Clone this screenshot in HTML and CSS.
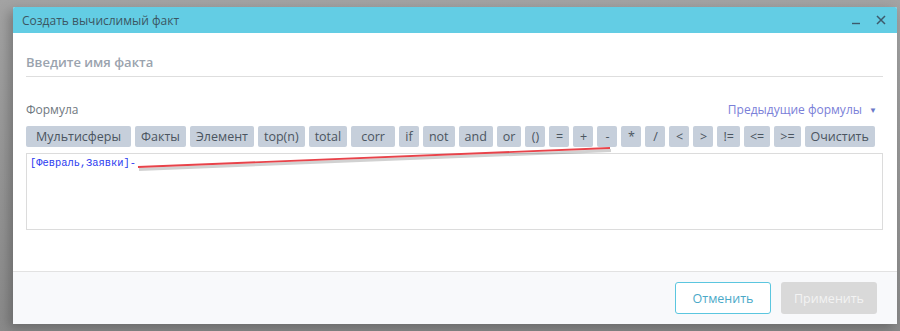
FILE: index.html
```html
<!DOCTYPE html>
<html lang="ru">
<head>
  <meta charset="UTF-8">
  <title>Создать вычислимый факт</title>
  <link rel="stylesheet" href="styles.css">
</head>
<body>
  <div class="dialog">
    <div class="dialog-header">
      <span class="dialog-title">Создать вычислимый факт</span>
      <div class="header-tools">
        <svg class="tool-icon" width="10" height="10" viewBox="0 0 10 10"><path d="M1 8.5h8" stroke="#3d5a6c" stroke-width="1.4"/></svg>
        <svg class="tool-icon" width="10" height="10" viewBox="0 0 10 10"><path d="M1 1l8 8M9 1l-8 8" stroke="#3d5a6c" stroke-width="1.5"/></svg>
      </div>
    </div>

    <div class="dialog-body">
      <div class="name-field">Введите имя факта</div>

      <div class="formula-row">
        <span class="formula-label">Формула</span>
        <span class="prev-formulas">Предыдущие формулы <span class="caret">&#9660;</span></span>
      </div>

      <div class="toolbar">
        <button class="op op-wide">Мультисферы</button>
        <button class="op">Факты</button>
        <button class="op">Элемент</button>
        <button class="op">top(n)</button>
        <button class="op">total</button>
        <button class="op op-corr">corr</button>
        <button class="op">if</button>
        <button class="op">not</button>
        <button class="op">and</button>
        <button class="op">or</button>
        <button class="op">()</button>
        <button class="op">=</button>
        <button class="op">+</button>
        <button class="op">-</button>
        <button class="op">*</button>
        <button class="op">/</button>
        <button class="op">&lt;</button>
        <button class="op">&gt;</button>
        <button class="op">!=</button>
        <button class="op">&lt;=</button>
        <button class="op">&gt;=</button>
        <button class="op">Очистить</button>
      </div>

      <div class="formula-box">[Февраль,Заявки]-</div>
    </div>

    <div class="dialog-footer">
      <button class="btn btn-cancel">Отменить</button>
      <button class="btn btn-apply">Применить</button>
    </div>
  </div>

  <!-- пометка на скриншоте -->
  <svg class="mark" width="900" height="331" viewBox="0 0 900 331">
    <line x1="139" y1="169.5" x2="611" y2="150.5" stroke="rgba(0,0,0,0.18)" stroke-width="3"/>
    <line x1="138" y1="167" x2="610" y2="148" stroke="#e8434a" stroke-width="1.8"/>
  </svg>
</body>
</html>
```

FILE: styles.css
```css
body {
  margin: 0;
  padding: 7px 3px 0 13px;
  height: 331px;
  box-sizing: border-box;
  background: linear-gradient(to bottom, #a3a3a3 0%, #8a8a8a 100%);
  font-family: 'Open Sans', sans-serif;
  position: relative;
  overflow: hidden;
}

.dialog {
  width: 884px;
  background: #ffffff;
  box-shadow: -4px 4px 12px rgba(0, 0, 0, 0.25);
  border-radius: 2px 2px 0 0;
}

.dialog-header {
  height: 26px;
  background: #63cde4;
  display: flex;
  align-items: center;
  justify-content: space-between;
  padding: 0 11px 0 9px;
  border-radius: 2px 2px 0 0;
}

.dialog-title {
  font-size: 12px;
  color: #3b5663;
}

.header-tools {
  display: flex;
  gap: 15px;
  align-items: center;
}

.dialog-body {
  padding: 15px 14px 41px 13px;
}

.name-field {
  height: 28px;
  line-height: 28px;
  font-size: 13px;
  font-weight: 600;
  color: #9aa3ae;
  border-bottom: 1px solid #dedede;
}

.formula-row {
  margin-top: 24px;
  height: 16px;
  display: flex;
  justify-content: space-between;
  align-items: center;
  padding-right: 6px;
}

.formula-label {
  font-size: 12px;
  color: #6f7880;
}

.prev-formulas {
  font-size: 12px;
  color: #7a80d8;
}

.caret {
  font-size: 8px;
  margin-left: 4px;
  color: #6b78c8;
  vertical-align: 1px;
}

.toolbar {
  margin-top: 9px;
  display: flex;
  gap: 4px;
}

.op {
  height: 21px;
  padding: 0 6px;
  min-width: 20px;
  border: none;
  border-radius: 2px;
  background: #c6cfdb;
  color: #4b5560;
  font-family: 'Open Sans', sans-serif;
  font-size: 12.5px;
  line-height: 21px;
}

.op-wide {
  padding: 0 10px;
}

.op-corr {
  padding: 0 10px;
}

.formula-box {
  margin-top: 6px;
  height: 77px;
  box-sizing: border-box;
  border: 1px solid #dcdcdc;
  padding: 3px 3px;
  font-family: 'Liberation Mono', monospace;
  font-size: 10.4px;
  color: #2b3bf0;
}

.dialog-footer {
  height: 53px;
  box-sizing: border-box;
  border-top: 1px solid #e2e2e2;
  background: #f8f9fb;
  display: flex;
  justify-content: flex-end;
  align-items: flex-start;
  gap: 10px;
  padding: 10px 20px 0 0;
}

.btn {
  width: 96px;
  height: 32px;
  border-radius: 3px;
  font-family: 'Open Sans', sans-serif;
  font-size: 12.5px;
}

.btn-cancel {
  background: #ffffff;
  border: 1px solid #5bc6df;
  color: #4aa9c8;
}

.btn-apply {
  background: #d9d9d9;
  border: none;
  color: #f3f3f3;
}

.mark {
  position: absolute;
  top: 0;
  left: 0;
  pointer-events: none;
}
```
